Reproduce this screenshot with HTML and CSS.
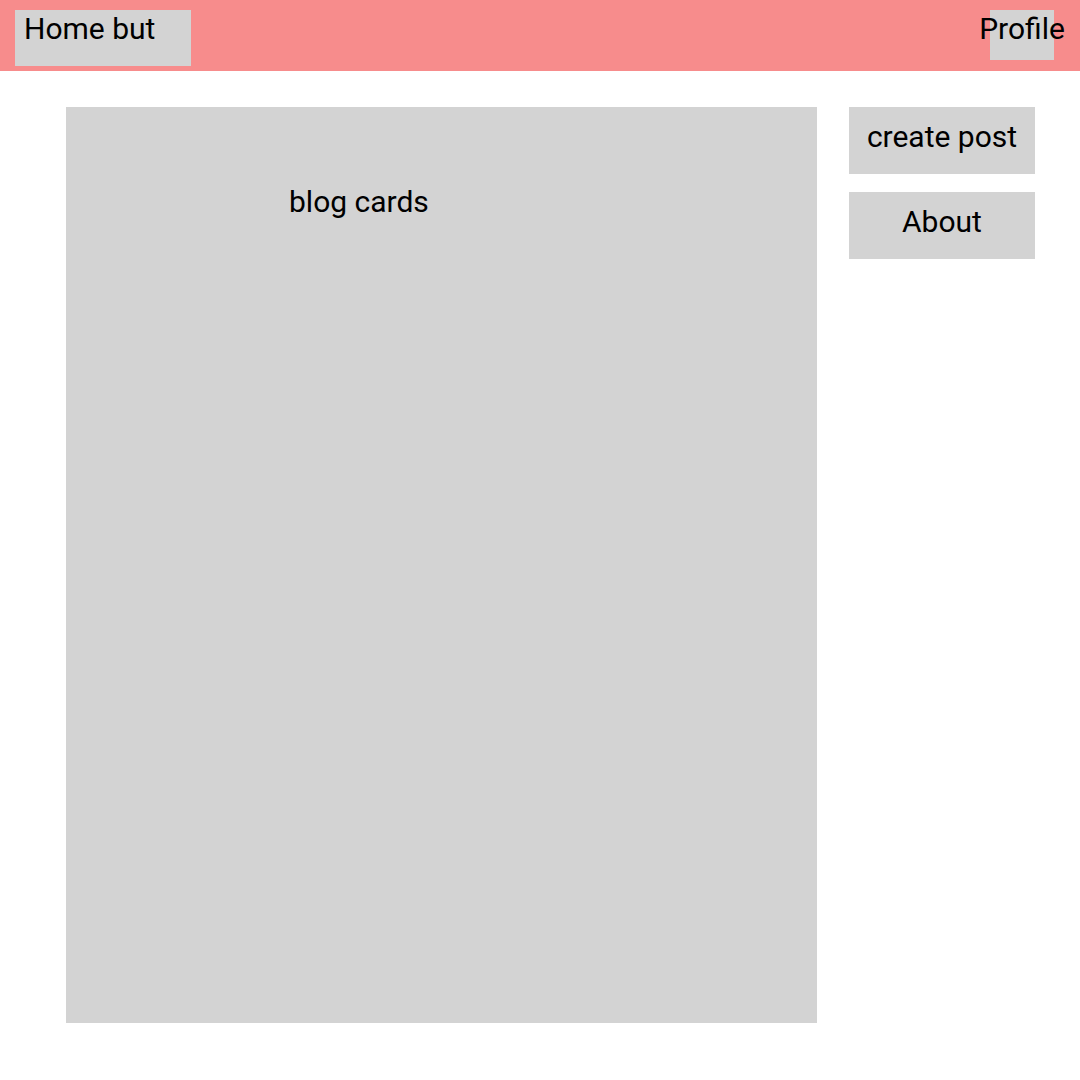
FILE: index.html
```html
<!DOCTYPE html>
<html>
<head>
<meta charset="utf-8">
<link rel="stylesheet" href="styles.css">
</head>
<body>
<header class="topbar">
  <div class="home-btn">Home but</div>
  <div class="profile-btn"><span>Profile</span></div>
</header>
<main class="layout">
  <section class="blog-cards"><div class="blog-title">blog cards</div></section>
  <aside class="sidebar">
    <div class="side-btn">create post</div>
    <div class="side-btn">About</div>
  </aside>
</main>
</body>
</html>
```

FILE: styles.css
```css
html, body {
  margin: 0;
  padding: 0;
  background: #ffffff;
  font-family: Roboto, "Liberation Sans", sans-serif;
  color: #000;
}
.topbar {
  height: 71px;
  background: #f78c8c;
  display: flex;
  justify-content: space-between;
  align-items: flex-start;
  padding: 10px 26px 0 15px;
  box-sizing: border-box;
}
.home-btn {
  width: 176px;
  height: 56px;
  background: #d3d3d3;
  box-sizing: border-box;
  padding: 4px 0 0 9px;
  font-size: 30px;
  line-height: 1;
  white-space: nowrap;
}
.profile-btn {
  width: 64px;
  height: 50px;
  background: #d3d3d3;
  display: flex;
  justify-content: center;
  font-size: 30px;
  line-height: 1;
  padding-top: 4px;
  box-sizing: border-box;
  white-space: nowrap;
}
.layout {
  display: flex;
  align-items: flex-start;
  padding: 36px 0 0 66px;
  gap: 32px;
}
.blog-cards {
  width: 751px;
  height: 916px;
  background: #d3d3d3;
  box-sizing: border-box;
  padding: 80px 0 0 223px;
}
.blog-title {
  font-size: 30px;
  line-height: 1;
}
.sidebar {
  display: flex;
  flex-direction: column;
  gap: 18px;
  width: 186px;
}
.side-btn {
  height: 67px;
  background: #d3d3d3;
  display: flex;
  justify-content: center;
  font-size: 30px;
  line-height: 1;
  padding-top: 15px;
  box-sizing: border-box;
}
```
